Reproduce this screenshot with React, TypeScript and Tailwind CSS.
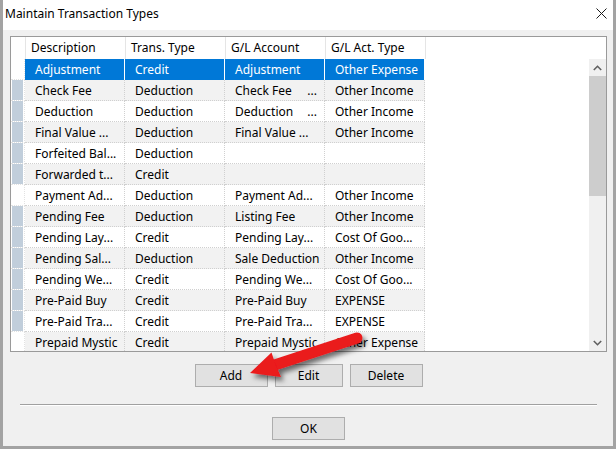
import React from "react";

type Row = {
    desc: string
    type: string
    acct: string
    acctMore?: boolean
    actType: string
    mark: boolean
}

const rows: Row[] = [
    {desc: "Adjustment", type: "Credit", acct: "Adjustment", actType: "Other Expense", mark: false},
    {desc: "Check Fee", type: "Deduction", acct: "Check Fee", acctMore: true, actType: "Other Income", mark: true},
    {desc: "Deduction", type: "Deduction", acct: "Deduction", acctMore: true, actType: "Other Income", mark: true},
    {desc: "Final Value ...", type: "Deduction", acct: "Final Value ...", actType: "Other Income", mark: true},
    {desc: "Forfeited Bal...", type: "Deduction", acct: "", actType: "", mark: true},
    {desc: "Forwarded t...", type: "Credit", acct: "", actType: "", mark: true},
    {desc: "Payment Ad...", type: "Deduction", acct: "Payment Ad...", actType: "Other Income", mark: false},
    {desc: "Pending Fee", type: "Deduction", acct: "Listing Fee", actType: "Other Income", mark: true},
    {desc: "Pending Lay...", type: "Credit", acct: "Pending Lay...", actType: "Cost Of Goo...", mark: true},
    {desc: "Pending Sal...", type: "Deduction", acct: "Sale Deduction", actType: "Other Income", mark: true},
    {desc: "Pending We...", type: "Credit", acct: "Pending We...", actType: "Cost Of Goo...", mark: true},
    {desc: "Pre-Paid Buy", type: "Credit", acct: "Pre-Paid Buy", actType: "EXPENSE", mark: true},
    {desc: "Pre-Paid Tra...", type: "Credit", acct: "Pre-Paid Tra...", actType: "EXPENSE", mark: true},
    {desc: "Prepaid Mystic", type: "Credit", acct: "Prepaid Mystic", actType: "Other Expense", mark: false},
]

const headers = ["Description", "Trans. Type", "G/L Account", "G/L Act. Type"]

const Cell = ({children, selected, odd}: { children?: React.ReactNode, selected: boolean, odd: boolean }) => (
    <div
        className={
            selected
                ? "w-[100px] h-full shrink-0 flex items-center pl-[10px] pr-[7px] bg-[#0078d7] text-white border-r border-white whitespace-nowrap overflow-hidden"
                : odd
                    ? "w-[100px] h-full shrink-0 flex items-center pl-[10px] pr-[7px] pt-px bg-[#f2f2f2] border-r border-b border-dotted border-[#d0d0d0] whitespace-nowrap overflow-hidden"
                    : "w-[100px] h-full shrink-0 flex items-center pl-[10px] pr-[7px] pt-px bg-white border-r border-b border-dotted border-[#d0d0d0] whitespace-nowrap overflow-hidden"
        }>
        {children}
    </div>
)

const Button = ({label, width}: { label: string, width: string }) => (
    <button className={`${width} h-[23px] border border-[#adadad] bg-[#e1e1e1] text-[12px] text-black flex items-center justify-center`}>
        {label}
    </button>
)

export default function App() {
    return (
        <div className="relative w-[616px] h-[449px] bg-[#a3a3a3] px-[3px] pb-[3px] flex flex-col font-['Noto_Sans',sans-serif] text-[12px] text-black">
            {/* title bar */}
            <div className="h-[30px] shrink-0 bg-white flex items-center justify-between pl-[2px] pr-[6px]">
                <span className="-mt-[3px]">Maintain Transaction Types</span>
                <svg width="11" height="11" viewBox="0 0 11 11" className="-mt-[4px]">
                    <path d="M0.5 0.5 L10.5 10.5 M10.5 0.5 L0.5 10.5" stroke="#1a1a1a" strokeWidth="1" fill="none"/>
                </svg>
            </div>

            <div className="flex-1 bg-[#f0f0f0] flex flex-col pt-[6px]">
                {/* list */}
                <div className="ml-[7px] w-[597px] h-[316px] shrink-0 border border-[#9a9a9a] bg-white flex flex-col overflow-hidden">
                    <div className="h-[22px] shrink-0 flex">
                        <div className="w-[14px] shrink-0"/>
                        {headers.map(h => (
                            <div key={h} className="w-[100px] shrink-0 flex items-center pl-[5px] border-l border-[#e5e5e5]">
                                {h}
                            </div>
                        ))}
                        <div className="flex-1 border-l border-[#e5e5e5]"/>
                    </div>
                    <div className="flex-1 flex min-h-0">
                        <div className="flex-1 flex flex-col overflow-hidden">
                            {rows.map((r, i) => {
                                const selected = i === 0
                                const odd = i % 2 === 1
                                return (
                                    <div key={r.desc} className="h-[21px] shrink-0 flex">
                                        <div className="w-[14px] shrink-0 h-full pl-px pr-px border-r border-b border-dotted border-[#e2e2e2]">
                                            {r.mark && <div className="w-full h-full bg-[#c1cedb]"/>}
                                        </div>
                                        <Cell selected={selected} odd={odd}>{r.desc}</Cell>
                                        <Cell selected={selected} odd={odd}>{r.type}</Cell>
                                        <Cell selected={selected} odd={odd}>
                                            {r.acctMore
                                                ? <div className="flex w-full justify-between"><span>{r.acct}</span><span>...</span></div>
                                                : r.acct}
                                        </Cell>
                                        <Cell selected={selected} odd={odd}>{r.actType}</Cell>
                                        <div className="flex-1"/>
                                    </div>
                                )
                            })}
                        </div>
                        {/* scrollbar */}
                        <div className="w-[17px] shrink-0 bg-[#f0f0f0] flex flex-col">
                            <div className="h-[17px] flex items-center justify-center">
                                <svg width="9" height="6" viewBox="0 0 9 6">
                                    <path d="M0.8 5 L4.5 1.3 L8.2 5" stroke="#606060" strokeWidth="1.6" fill="none"/>
                                </svg>
                            </div>
                            <div className="h-[120px] bg-[#cdcdcd]"/>
                            <div className="flex-1"/>
                            <div className="h-[17px] flex items-center justify-center">
                                <svg width="9" height="6" viewBox="0 0 9 6">
                                    <path d="M0.8 1 L4.5 4.7 L8.2 1" stroke="#606060" strokeWidth="1.6" fill="none"/>
                                </svg>
                            </div>
                        </div>
                    </div>
                </div>

                {/* action buttons */}
                <div className="mt-[12px] flex justify-center gap-[7px] pl-px">
                    <Button label="Add" width="w-[73px]"/>
                    <Button label="Edit" width="w-[68px]"/>
                    <Button label="Delete" width="w-[73px]"/>
                </div>

                <div className="mt-[17px] ml-[17px] mr-[16px] border-t border-[#a0a0a0] border-b border-b-white"/>

                <div className="mt-[11px] flex justify-center pl-px">
                    <Button label="OK" width="w-[73px]"/>
                </div>
            </div>

            {/* annotation arrow */}
            <svg className="absolute left-0 top-0 pointer-events-none" width="616" height="449" viewBox="0 0 616 449">
                <defs>
                    <filter id="sh" x="-20%" y="-50%" width="140%" height="200%">
                        <feDropShadow dx="3" dy="4" stdDeviation="2.5" floodColor="#000" floodOpacity="0.55"/>
                    </filter>
                </defs>
                <g filter="url(#sh)">
                    <line x1="270" y1="366.5" x2="357" y2="338" stroke="#ea1a1f" strokeWidth="11" strokeLinecap="round"/>
                    <polygon points="250,373 271.5,352.5 275.5,364.5 281,377" fill="#ea1a1f"/>
                </g>
            </svg>
        </div>
    );
}
